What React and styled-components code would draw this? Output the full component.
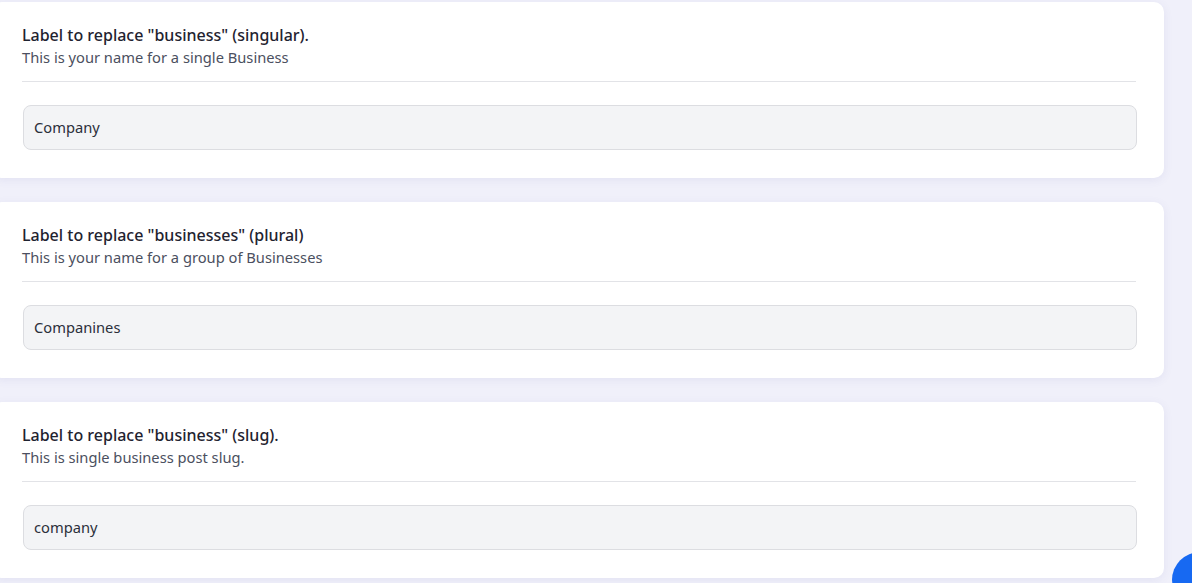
import React from 'react';
import styled, { createGlobalStyle } from 'styled-components';

const GlobalStyle = createGlobalStyle`
  html, body {
    margin: 0;
    padding: 0;
    background: #f0f0fa;
    overflow: hidden;
  }
  body {
    font-family: "Noto Sans", "Open Sans", sans-serif;
  }
`;

const Page = styled.div`
  display: flex;
  flex-direction: column;
  gap: 24px;
  padding: 2px 0 0 0;
  margin-left: -8px;
  width: 1172px;
  height: 583px;
`;

const Card = styled.section`
  background: #ffffff;
  border-radius: 10px;
  box-shadow: 0 2px 10px rgba(90, 90, 170, 0.09);
  padding: 22px 27px 29px 30px;
  height: 176px;
  box-sizing: border-box;
`;

const Title = styled.h3`
  margin: 0;
  font-size: 16px;
  line-height: 22px;
  font-weight: 500;
  color: #1f2330;
`;

const Hint = styled.p`
  margin: 0;
  font-size: 14.7px;
  line-height: 22px;
  color: #4b5060;
`;

const Divider = styled.hr`
  border: none;
  border-top: 1px solid #e2e3e7;
  margin: 13px 1px 0 0;
`;

const Field = styled.input`
  display: block;
  box-sizing: border-box;
  width: calc(100% - 1px);
  margin: 22.5px 0 0 1px;
  height: 45px;
  padding: 0 10px;
  background: #f3f4f6;
  border: 1px solid #dcdde1;
  border-radius: 8px;
  font-family: inherit;
  font-size: 14.7px;
  color: #2b2f3a;
  outline: none;
`;

const ChatButton = styled.div`
  position: fixed;
  left: 1172px;
  top: 552px;
  width: 56px;
  height: 56px;
  border-radius: 50%;
  background: #1769f2;
`;

const fields = [
  {
    title: 'Label to replace "business" (singular).',
    hint: 'This is your name for a single Business',
    value: 'Company',
  },
  {
    title: 'Label to replace "businesses" (plural)',
    hint: 'This is your name for a group of Businesses',
    value: 'Companines',
  },
  {
    title: 'Label to replace "business" (slug).',
    hint: 'This is single business post slug.',
    value: 'company',
  },
];

const App = () => (
  <>
    <GlobalStyle />
    <Page>
      {fields.map((f) => (
        <Card key={f.title}>
          <Title>{f.title}</Title>
          <Hint>{f.hint}</Hint>
          <Divider />
          <Field defaultValue={f.value} />
        </Card>
      ))}
    </Page>
    <ChatButton />
  </>
);

export default App;
